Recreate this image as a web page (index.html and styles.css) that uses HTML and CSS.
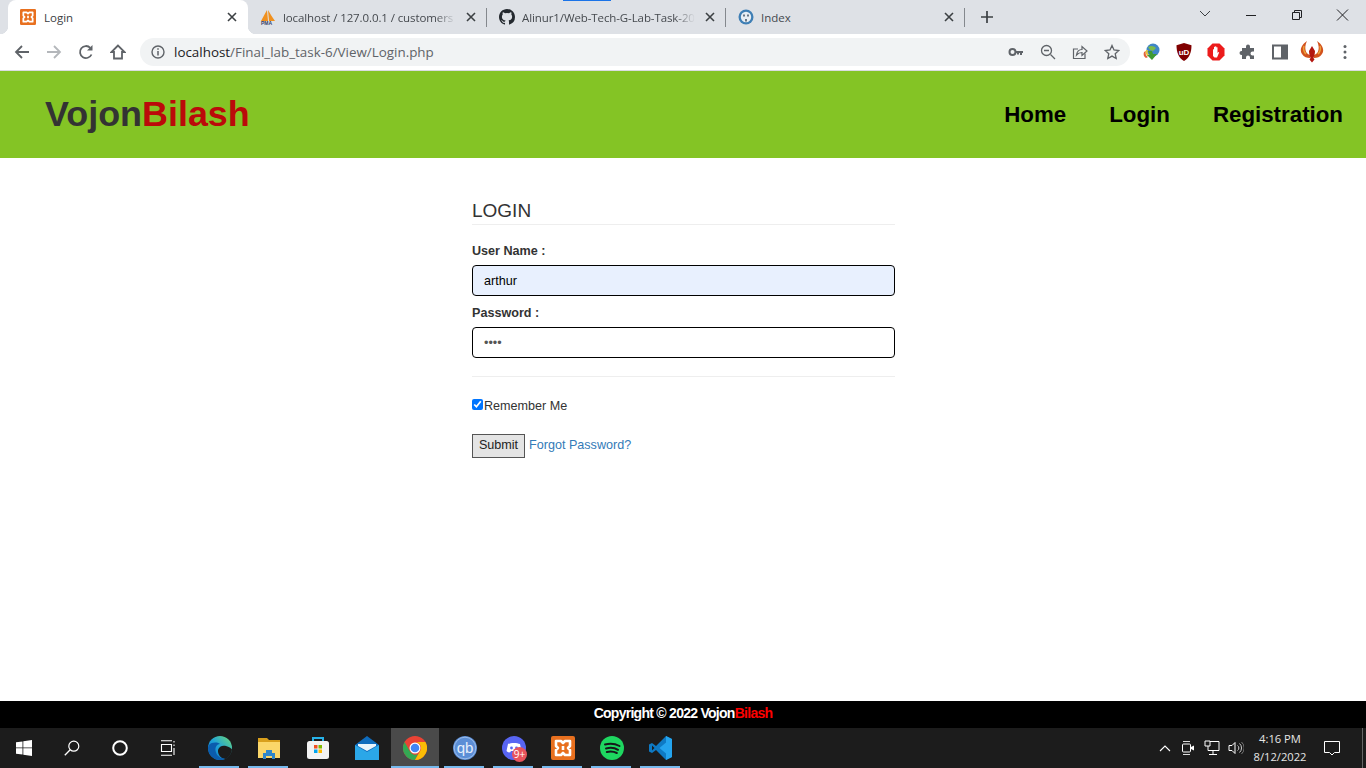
FILE: index.html
```html
<!DOCTYPE html>
<html lang="en">

<head>
    <meta charset="UTF-8">
    <meta name="viewport" content="width=device-width, initial-scale=1.0">
    <title>Login</title>
    <link rel="stylesheet" href="styles.css">
</head>

<body>
    <div class="screen">

        <!-- tabs -->
        <div class="tabstrip">
            <div class="load_bar"></div>
            <div class="tab tab_active">
                <svg class="favicon" viewBox="0 0 24 24"><rect width="24" height="24" rx="2" fill="#e8701f"/><path d="M5 5h5l2 2 2-2h5v5l-2 2 2 2v5h-5l-2-2-2 2H5v-5l2-2-2-2zM12 10v4" fill="none" stroke="#fff" stroke-width="2.600" stroke-linejoin="round"/></svg>
                <span class="tab_title">Login</span>
                <svg class="tab_x" viewBox="0 0 10 10"><path d="M1 1l8 8M9 1l-8 8" stroke="#3c4043" stroke-width="1.600"/></svg>
            </div>
            <div class="tab">
                <svg class="favicon" viewBox="0 0 16 16"><path d="M1 12C3 8 5 5 7 1l1 11zM8 1c2 3 4 7 7 11H9z" fill="#f0901e"/><text x="1" y="16" class="pma">PMA</text></svg>
                <span class="tab_title fade">localhost / 127.0.0.1 / customers</span>
                <svg class="tab_x" viewBox="0 0 10 10"><path d="M1 1l8 8M9 1l-8 8" stroke="#3c4043" stroke-width="1.600"/></svg>
            </div>
            <div class="tab">
                <svg class="favicon" viewBox="0 0 16 16"><path fill="#24292f" d="M8 0C3.580 0 0 3.580 0 8c0 3.540 2.290 6.530 5.470 7.590.4.070.55-.17.55-.38v-1.340c-2.230.48-2.690-1.070-2.690-1.070-.36-.93-.89-1.170-.89-1.170-.73-.5.050-.49.050-.49.8.060 1.230.82 1.230.82.710 1.220 1.870.87 2.330.66.070-.52.280-.87.510-1.070-1.780-.2-3.640-.89-3.640-3.950 0-.87.310-1.590.82-2.150-.08-.2-.36-1.020.08-2.120 0 0 .67-.21 2.200.82a7.600 7.600 0 0 1 4 0c1.530-1.040 2.200-.82 2.200-.82.440 1.100.16 1.920.08 2.120.51.560.82 1.270.82 2.150 0 3.070-1.870 3.750-3.650 3.950.29.250.54.730.54 1.480v2.200c0 .21.150.46.55.38A8 8 0 0 0 16 8c0-4.420-3.580-8-8-8z"/></svg>
                <span class="tab_title fade">Alinur1/Web-Tech-G-Lab-Task-20</span>
                <svg class="tab_x" viewBox="0 0 10 10"><path d="M1 1l8 8M9 1l-8 8" stroke="#3c4043" stroke-width="1.600"/></svg>
            </div>
            <div class="tab">
                <svg class="favicon" viewBox="0 0 16 16"><circle cx="8" cy="8" r="7.500" fill="#3f7fb5"/><circle cx="8" cy="8" r="5.200" fill="#e8eef4"/><path d="M6 5.500v2M10 5.500v2M8 10v2.500" stroke="#345" stroke-width="1.400"/></svg>
                <span class="tab_title">Index</span>
                <svg class="tab_x" viewBox="0 0 10 10"><path d="M1 1l8 8M9 1l-8 8" stroke="#3c4043" stroke-width="1.600"/></svg>
            </div>
            <svg class="new_tab" viewBox="0 0 12 12"><path d="M6 0v12M0 6h12" stroke="#3c4043" stroke-width="1.700"/></svg>
            <div class="win_btns">
                <svg viewBox="0 0 46 34"><path d="M18 11l5 5 5-5" fill="none" stroke="#3c4043"/></svg>
                <svg viewBox="0 0 46 34"><path d="M18 15.500h10" stroke="#202124"/></svg>
                <svg viewBox="0 0 46 34"><path d="M18.500 12.500h7v7h-7zM20.500 12.500v-2h7v7h-2" fill="none" stroke="#202124"/></svg>
                <svg viewBox="0 0 46 34"><path d="M17 9.500l11 11M28 9.500l-11 11" stroke="#202124"/></svg>
            </div>
        </div>

        <!-- toolbar -->
        <div class="toolbar">
            <svg class="tool_icon" viewBox="0 0 16 16"><path d="M15 8H2M8 2L2 8l6 6" fill="none" stroke="#5f6368" stroke-width="1.800"/></svg>
            <svg class="tool_icon" viewBox="0 0 16 16"><path d="M1 8h13M8 2l6 6-6 6" fill="none" stroke="#b4b7bb" stroke-width="1.800"/></svg>
            <svg class="tool_icon" viewBox="0 0 16 16"><path d="M13.500 10.500A6 6 0 1 1 12.300 3.800" fill="none" stroke="#5f6368" stroke-width="1.800"/><path d="M14.500 1v5.500H9z" fill="#5f6368"/></svg>
            <svg class="tool_icon" viewBox="0 0 16 16"><path d="M8 1.500L1.500 8H4v6.500h8V8h2.500z" fill="none" stroke="#5f6368" stroke-width="1.800"/></svg>
            <div class="omnibox">
                <svg class="omni_info" viewBox="0 0 14 14"><circle cx="7" cy="7" r="6" fill="none" stroke="#5f6368" stroke-width="1.400"/><path d="M7 6v4.500M7 3.300v1.500" stroke="#5f6368" stroke-width="1.500"/></svg>
                <span class="url"><span class="url_host">localhost</span>/Final_lab_task-6/View/Login.php</span>
                <svg class="omni_icon" viewBox="0 0 16 16"><circle cx="4.500" cy="8" r="3" fill="none" stroke="#5f6368" stroke-width="2"/><path d="M7 7h8v2h-1v2h-2V9h-1v1.500H9V9H7z" fill="#5f6368"/></svg>
                <svg class="omni_icon" viewBox="0 0 16 16"><circle cx="6.500" cy="6.500" r="5" fill="none" stroke="#5f6368" stroke-width="1.300"/><path d="M10.500 10.500L15 15M4 6.500h5" stroke="#5f6368" stroke-width="1.300"/></svg>
                <svg class="omni_icon" viewBox="0 0 16 16"><path d="M13 9.500V14.500H1.500V5H6" fill="none" stroke="#5f6368" stroke-width="1.200"/><path d="M4.500 11C5 7.500 7.500 5.500 10 5.500V2.500L15 7l-5 4.500V8.500c-2.500 0-4 .8-5.500 2.500z" fill="none" stroke="#5f6368" stroke-width="1.200"/></svg>
                <svg class="omni_icon" viewBox="0 0 16 16"><path d="M8 1.500l2 4.500 4.800.5-3.600 3.200 1 4.800L8 12.100l-4.200 2.400 1-4.800L1.200 6.500 6 6z" fill="none" stroke="#5f6368" stroke-width="1.300"/></svg>
            </div>
            <div class="extensions">
                <svg class="ext" viewBox="0 0 18 18"><circle cx="10" cy="7" r="6.500" fill="#3f86c7"/><path d="M5 4c3-2 6-1 8 1l-3 3-3-1z" fill="#7dbb4a"/><path d="M1 9c-1 3 0 5 2 6l2-1c-2-1-3-3-2-6z" fill="#e2643a"/><path d="M3 7c-1 3 0 5 2 6l1-1c-1-1-2-3-1-5z" fill="#e6c53c"/><path d="M5 8h4l1 3h4l-5 6-5-5h3z" fill="#3f9b32"/></svg>
                <svg class="ext" viewBox="0 0 18 18"><path d="M9 0l7.500 2.200C16.500 9 14.500 15 9 18 3.500 15 1.500 9 1.500 2.200z" fill="#800000"/><text x="9" y="11.500" class="ublock">uD</text></svg>
                <svg class="ext" viewBox="0 0 18 18"><path d="M5.500 .5h7L17.500 5.500v7L12.500 17.500h-7L.5 12.500v-7z" fill="#ec1c1c"/><path d="M6 13V6.500c.3-.5.8-.5 1 0V4.200c.3-.5.9-.5 1.100 0V3.700c.3-.5 1-.5 1.200 0v.8c.3-.4.9-.4 1.200 0V10l1-1c.8 0 .7.800.3 1.300L10 14.500H7.500z" fill="#fff"/></svg>
                <svg class="ext" viewBox="-1 -1 18 18"><path d="M6 2.500a2 2 0 0 1 4 0V4h4v3.500h-1.500a2 2 0 0 0 0 4H14V15H10v-1.500a2 2 0 0 0-4 0V15H2v-4h-.5a2 2 0 0 1 0-4H2V4h4z" fill="#5f6368"/></svg>
                <svg class="ext" viewBox="-1 -1 18 18"><rect x="1" y="1.500" width="14" height="13" fill="none" stroke="#5f6368" stroke-width="2"/><rect x="9" y="1.500" width="6" height="13" fill="#5f6368"/></svg>
                <svg class="ext ext_big" viewBox="0 0 24 24"><path d="M10 15C5 14 4 7 7 1 2 4-1 10 2 14c2 3 5 4 8 4z" fill="#d2521d"/><path d="M14 15c5-1 6-8 3-14 5 3 8 9 5 13-2 3-5 4-8 4z" fill="#d2521d"/><path d="M9 11c1-2 2-3 3-5 1 2 2 3 3 5 0 3-1 5-1.500 7l1 1.500-2.500 3-2.500-3 1-1.500C10 16 9 14 9 11z" fill="#b3160f"/><path d="M4 6c-1 3 0 6 2 8M20 6c1 3 0 6-2 8" stroke="#eda03a" stroke-width="1.500" fill="none"/></svg>
                <svg class="ext ext_dots" viewBox="0 0 4 16"><circle cx="2" cy="2.500" r="1.500" fill="#5f6368"/><circle cx="2" cy="8" r="1.500" fill="#5f6368"/><circle cx="2" cy="13.500" r="1.500" fill="#5f6368"/></svg>
            </div>
        </div>

        <!-- the page itself -->
        <header class="site_head">
            <a class="logo" href="#">Vojon<span class="logo_red">Bilash</span></a>
            <nav class="site_nav">
                <a href="#">Home</a>
                <a href="#">Login</a>
                <a href="#">Registration</a>
            </nav>
        </header>

        <main class="site_main">
            <form class="login_form">
                <h3 class="form_title">LOGIN</h3>
                <label class="field_label" for="user">User Name :</label>
                <input class="field field_filled" id="user" type="text" value="arthur">
                <label class="field_label" for="pass">Password :</label>
                <input class="field" id="pass" type="password" value="1234">
                <hr class="form_line">
                <label class="remember"><input type="checkbox" checked>Remember Me</label>
                <div class="form_actions">
                    <input class="submit_btn" type="submit" value="Submit">
                    <a class="forgot" href="#">Forgot Password?</a>
                </div>
            </form>
        </main>

        <footer class="site_foot">Copyright © 2022 Vojon<span class="foot_red">Bilash</span></footer>

        <!-- windows taskbar -->
        <div class="taskbar">
            <div class="task_sys">
                <svg viewBox="0 0 16 16"><path d="M0 2.300l6.500-.9v6.100H0zM7.300 1.300L16 0v7.500H7.300zM0 8.300h6.500v6.200L0 13.700zM7.300 8.300H16V16l-8.700-1.200z" fill="#fff"/></svg>
                <svg viewBox="0 0 16 16"><circle cx="9.800" cy="6.200" r="5" fill="none" stroke="#fff" stroke-width="1.200"/><path d="M6.200 9.800L.8 15.200" stroke="#fff" stroke-width="1.300"/></svg>
                <svg viewBox="0 0 16 16"><circle cx="8" cy="8" r="6.800" fill="none" stroke="#fff" stroke-width="2"/></svg>
                <svg viewBox="0 0 16 16"><path d="M1.500 4.500h10v7h-10zM1 .8h11M1 15.200h11M14 1v1.500M14 4.500V6M14 8v7" fill="none" stroke="#fff" stroke-width="1.100"/></svg>
            </div>
            <div class="task_apps">
                <div class="app on">
                    <svg viewBox="0 0 24 24"><defs><linearGradient id="edgeg" x1="0" y1="1" x2="1" y2="0"><stop offset="0" stop-color="#0f6fc6"/><stop offset=".5" stop-color="#1fa3d8"/><stop offset="1" stop-color="#6fdc74"/></linearGradient></defs><circle cx="12" cy="12" r="12" fill="url(#edgeg)"/><path d="M10 14c1-4 5-5 8-4 3 .8 5 2 6 3.500-.5 4.500-3 8-6.500 9.500C13 23 9.500 18.500 10 14z" fill="#1c1c1c"/><path d="M1 9c3-3 8-3 11-1-3 0-5 3-4.500 6.500C8 19 12 23 17 22.500 15 23.500 13.500 24 12 24 5 24 0 18 0 12c0-1 .4-2 1-3z" fill="#0b5cad"/></svg>
                </div>
                <div class="app on">
                    <svg viewBox="0 0 24 24"><path d="M1 2h9l2 2h11v18H1z" fill="#d99f1c"/><path d="M1 6h22v16H1z" fill="#fbd669"/><path d="M6 23v-6h3v-3h6v3h3v6h-3v-3H9v3z" fill="#2f86c9"/></svg>
                </div>
                <div class="app">
                    <svg viewBox="0 0 24 24"><path d="M7 6V2h10v4" fill="none" stroke="#27b3ea" stroke-width="2"/><rect x="1" y="5" width="22" height="18" rx="2.500" fill="#f3f3f3"/><rect x="8" y="9" width="3.500" height="3.500" fill="#f25022"/><rect x="12.500" y="9" width="3.500" height="3.500" fill="#7fba00"/><rect x="8" y="13.500" width="3.500" height="3.500" fill="#00a4ef"/><rect x="12.500" y="13.500" width="3.500" height="3.500" fill="#ffb900"/></svg>
                </div>
                <div class="app">
                    <svg viewBox="0 0 24 24"><path d="M0 9l12-9 12 9v14H0z" fill="#0f6cbd"/><path d="M0 9l12 7 12-7v15H0z" fill="#2ba7e8"/><path d="M3 8h18v2l-9 5-9-5z" fill="#e8f4fb"/></svg>
                </div>
                <div class="app app_active on">
                    <svg viewBox="0 0 24 24"><circle cx="12" cy="12" r="12" fill="#ea4335"/><path d="M12 24A12 12 0 0 1 1.600 6L7 15.500a6 6 0 0 0 8 2.500z" fill="#34a853"/><path d="M12 6h10.400A12 12 0 0 1 12 24l5.200-9A6 6 0 0 0 12 6z" fill="#fbbc05"/><circle cx="12" cy="12" r="5.500" fill="#fff"/><circle cx="12" cy="12" r="4.300" fill="#4285f4"/></svg>
                </div>
                <div class="app on">
                    <svg viewBox="0 0 24 24"><circle cx="12" cy="12" r="12" fill="#5b8ed6"/><circle cx="12" cy="12" r="10.800" fill="none" stroke="#a9c6ee" stroke-width=".8"/><text x="12" y="17" class="qb">qb</text></svg>
                </div>
                <div class="app on">
                    <svg viewBox="0 0 24 24"><circle cx="12" cy="12" r="12" fill="#5865f2"/><path d="M6 8c3-1.500 9-1.500 12 0l1.500 7c-1 1-2.500 1.500-3.500 1.500l-1-1.500h-6L8 16.500C7 16.500 5.500 16 4.500 15z" fill="#fff"/><circle cx="9.500" cy="12" r="1.400" fill="#5865f2"/><circle cx="14.500" cy="12" r="1.400" fill="#5865f2"/></svg>
                    <span class="app_badge">9+</span>
                </div>
                <div class="app on">
                    <svg viewBox="0 0 24 24"><rect width="24" height="24" rx="2" fill="#e8701f"/><path d="M5 5h5l2 2 2-2h5v5l-2 2 2 2v5h-5l-2-2-2 2H5v-5l2-2-2-2zM12 10v4" fill="none" stroke="#fff" stroke-width="2.600" stroke-linejoin="round"/></svg>
                </div>
                <div class="app on">
                    <svg viewBox="0 0 24 24"><circle cx="12" cy="12" r="12" fill="#1ed760"/><path d="M5 8.500c5-1.500 10-1 14.500 1.500M6 12.500c4-1 8.500-.8 12 1.300M6.800 16c3.500-.8 7-.5 10 1" fill="none" stroke="#16181a" stroke-width="2" stroke-linecap="round"/></svg>
                </div>
                <div class="app on">
                    <svg viewBox="0 0 24 24"><path d="M17 0l6 3v18l-6 3L7 14l-4 3-3-1.500v-7L3 7l4 3z" fill="#0e7ac4"/><path d="M17 0l6 3v18l-6 3zM17 6.500L10.500 12 17 17.500z" fill="#24a4ee"/><path d="M3 9.500v5L5.500 12z" fill="#1c1c1c"/></svg>
                </div>
            </div>
            <div class="task_tray">
                <svg class="tray_chev" viewBox="0 0 12 12"><path d="M1 9l5-5 5 5" fill="none" stroke="#fff" stroke-width="1.100"/></svg>
                <svg class="tray_icon" viewBox="0 0 16 16"><path d="M3 1.500h7M3 14.500h7" stroke="#ddd"/><rect x="2.500" y="4" width="8" height="8" rx="1" fill="none" stroke="#fff"/><path d="M11 7l3-1.500v5L11 9z" fill="#fff"/></svg>
                <svg class="tray_icon" viewBox="0 0 16 16"><path d="M4 1.500h11v9H4zM9 10.500v4M5 14.500h8" fill="none" stroke="#fff"/><path d="M1 1h5v5H1z" fill="#1c1c1c" stroke="#fff"/></svg>
                <svg class="tray_icon" viewBox="0 0 16 16"><path d="M1 5.500h3l3-3v11l-3-3H1z" fill="none" stroke="#fff"/><path d="M9.500 5.500a3 3 0 0 1 0 5M11.500 3.500a6 6 0 0 1 0 9" fill="none" stroke="#ccc"/><path d="M13.500 2a8 8 0 0 1 0 12" fill="none" stroke="#777"/></svg>
                <div class="clock"><span>4:16 PM</span><span>8/12/2022</span></div>
                <svg class="tray_note" viewBox="0 0 16 16"><path d="M.5 1.500h15v11h-5l-2.500 2.500-2.500-2.500h-5z" fill="none" stroke="#fff"/></svg>
                <div class="show_desktop"></div>
            </div>
        </div>
    </div>
</body>

</html>
```
FILE: styles.css
```css
body {
    margin: 0;
    font-family: "Liberation Sans", Arial, sans-serif;
    font-size: 12.6px;
    color: #333;
}

.screen {
    display: flex;
    flex-direction: column;
    height: 768px;
    overflow: hidden;
}

/* Tabs */

.tabstrip {
    position: relative;
    display: flex;
    flex: none;
    height: 34px;
    padding-left: 8px;
    background-color: #dee1e6;
    font-family: "Open Sans", sans-serif;
}

.load_bar {
    position: absolute;
    top: 0;
    left: 563px;
    width: 48px;
    height: 1px;
    background-color: #1a73e8;
}

.tab {
    position: relative;
    display: flex;
    align-items: center;
    box-sizing: border-box;
    width: 239px;
    padding: 0 11px 0 12px;
    font-size: 11.5px;
    color: #45494e;
}

.tab:not(.tab_active)::after {
    content: "";
    position: absolute;
    top: 8px;
    right: 0;
    width: 1px;
    height: 19px;
    background-color: #84888d;
}

.tab_active {
    width: 240px;
    border-radius: 8px 8px 0 0;
    background-color: #fff;
    color: #3c4043;
}

.tab_active::before,
.tab_active::after {
    content: "";
    position: absolute;
    bottom: 0;
    width: 8px;
    height: 8px;
}

.tab_active::before {
    left: -8px;
    background: radial-gradient(circle at 0 0, transparent 8px, #fff 8.5px);
}

.tab_active::after {
    right: -8px;
    background: radial-gradient(circle at 100% 0, transparent 8px, #fff 8.5px);
}

.favicon {
    flex: none;
    width: 16px;
    height: 16px;
    margin-right: 7px;
}

.tab_active .favicon {
    margin-right: 8px;
}

.pma {
    font: bold 5px "Liberation Sans", sans-serif;
    fill: #34406b;
}

.tab_title {
    flex: 1;
    overflow: hidden;
    white-space: nowrap;
}

.fade {
    margin-right: 10px;
    letter-spacing: -0.1px;
    -webkit-mask-image: linear-gradient(to right, #000 88%, transparent 100%);
    mask-image: linear-gradient(to right, #000 88%, transparent 100%);
}

.tab_x {
    flex: none;
    width: 10px;
    height: 10px;
}

.new_tab {
    flex: none;
    width: 12px;
    height: 12px;
    margin: 11px 0 0 16px;
}

.win_btns {
    display: flex;
    margin-left: auto;
}

.win_btns svg {
    display: block;
    width: 46px;
    height: 34px;
}

/* Toolbar */

.toolbar {
    display: flex;
    flex: none;
    align-items: center;
    box-sizing: border-box;
    height: 37px;
    padding: 0 0 1px 14px;
    border-bottom: 1px solid #dadce0;
    background-color: #fff;
}

.tool_icon {
    flex: none;
    width: 16px;
    height: 16px;
    margin-right: 16px;
}

.omnibox {
    display: flex;
    flex: none;
    align-items: center;
    box-sizing: border-box;
    width: 990px;
    height: 28px;
    margin-left: -2px;
    padding: 0 10px 0 11px;
    border-radius: 14px;
    background-color: #f1f3f4;
    font-family: "Open Sans", sans-serif;
    font-size: 13.4px;
    color: #5f6368;
}

.omni_info {
    flex: none;
    width: 14px;
    height: 14px;
    margin-right: 9px;
}

.url {
    flex: 1;
    white-space: nowrap;
}

.url_host {
    color: #202124;
}

.omni_icon {
    flex: none;
    width: 16px;
    height: 16px;
    margin-left: 16px;
}

.extensions {
    display: flex;
    flex: 1;
    align-items: center;
    padding-left: 13px;
}

.ext {
    flex: none;
    width: 18px;
    height: 18px;
    margin-right: 14px;
}

.ublock {
    font: bold 8px "Liberation Sans", sans-serif;
    fill: #fff;
    text-anchor: middle;
}

.ext_big {
    width: 24px;
    height: 24px;
    margin: 0 19px 0 -3px;
}

.ext_dots {
    width: 4px;
    height: 16px;
    margin-right: 0;
}

/* Site header */

.site_head {
    display: flex;
    flex: none;
    align-items: center;
    justify-content: space-between;
    box-sizing: border-box;
    height: 87px;
    padding: 0 23px 0 45px;
    background-color: #84c425;
}

.logo {
    font-size: 35.9px;
    font-weight: bold;
    color: #333;
    text-decoration: none;
}

.logo_red {
    color: #bb0a0a;
}

.site_nav {
    display: flex;
    gap: 43px;
}

.site_nav a {
    font-size: 22.3px;
    font-weight: bold;
    color: #000;
    text-decoration: none;
}

/* Login form */

.site_main {
    flex: 1;
    padding-left: 472px;
    background-color: #fff;
}

.login_form {
    display: flex;
    flex-direction: column;
    align-items: flex-start;
    width: 423px;
}

.form_title {
    align-self: stretch;
    margin: 42px 0 0;
    padding-bottom: 2px;
    border-bottom: 1px solid #eee;
    font-size: 19px;
    font-weight: normal;
    line-height: 22px;
}

.field_label {
    margin-top: 16px;
    font-weight: bold;
    line-height: 20px;
}

.field_label + .field {
    margin-top: 4px;
}

.field + .field_label {
    margin-top: 7px;
}

.field {
    box-sizing: border-box;
    width: 100%;
    height: 31px;
    padding: 0 11px;
    border: 1.500px solid #000;
    border-radius: 4px;
    outline: none;
    background-color: #fff;
    font-family: inherit;
    font-size: 12.6px;
    color: #555;
}

.field_filled {
    background-color: #e8f0fe;
    color: #000;
}

.form_line {
    align-self: stretch;
    margin: 18px 0 0;
    border: 0;
    border-top: 1px solid #eee;
}

.remember {
    display: flex;
    align-items: center;
    margin-top: 19px;
    line-height: 20px;
}

.remember input {
    width: 11px;
    height: 11px;
    margin: 0 1px 3px 0;
}

.form_actions {
    display: flex;
    align-items: center;
    gap: 4px;
    margin-top: 18px;
}

.submit_btn {
    box-sizing: border-box;
    width: 53px;
    height: 24px;
    padding: 0 0 2px;
    border: 1px solid #555;
    background-color: #e4e4e4;
    font-family: inherit;
    font-size: 12.6px;
    color: #222;
}

.forgot {
    margin-bottom: 2px;
    color: #337ab7;
    text-decoration: none;
}

/* Footer */

.site_foot {
    flex: none;
    height: 27px;
    background-color: #000;
    font-size: 14px;
    font-weight: bold;
    line-height: 25px;
    letter-spacing: -0.73px;
    text-align: center;
    color: #fff;
}

.foot_red {
    color: #f00;
}

/* Taskbar */

.taskbar {
    display: flex;
    flex: none;
    height: 40px;
    background-color: #1c1c1c;
    font-family: "Open Sans", sans-serif;
}

.task_sys {
    display: flex;
    flex: none;
    width: 195px;
}

.task_sys svg {
    width: 16px;
    height: 16px;
    padding: 12px 16px;
}

.task_apps {
    display: flex;
}

.app {
    position: relative;
    display: flex;
    align-items: center;
    justify-content: center;
    box-sizing: border-box;
    width: 49px;
    height: 40px;
}

.app svg {
    width: 24px;
    height: 24px;
}

.app.on::after {
    content: "";
    position: absolute;
    left: 4px;
    right: 5px;
    bottom: 0;
    height: 2px;
    background-color: #76b9ed;
}

.app_active {
    width: 48px;
    margin-right: 1px;
    background-color: #4a4a4a;
}

.app_active.on::after {
    left: 0;
    right: 0;
}

.qb {
    font: 15px "Liberation Sans", sans-serif;
    fill: #e4eefb;
    text-anchor: middle;
}

.app_badge {
    position: absolute;
    top: 19px;
    left: 23px;
    width: 15px;
    height: 15px;
    border-radius: 50%;
    background-color: #e8545c;
    font-size: 10px;
    line-height: 15px;
    text-align: center;
    color: #fff;
}

.task_tray {
    display: flex;
    flex: 1;
    align-items: center;
    justify-content: flex-end;
    color: #fff;
}

.tray_chev {
    width: 12px;
    height: 12px;
    margin-right: 9px;
}

.tray_icon {
    width: 16px;
    height: 16px;
    margin-right: 8px;
}

.clock {
    display: flex;
    flex-direction: column;
    align-items: center;
    width: 56px;
    margin: 0 16px 0 0;
    font-size: 11.2px;
    line-height: 18px;
    color: #e6e6e6;
}

.tray_note {
    width: 16px;
    height: 16px;
    margin-right: 22px;
}

.show_desktop {
    width: 1px;
    height: 40px;
    margin-right: 3px;
    background-color: #666;
}
```
